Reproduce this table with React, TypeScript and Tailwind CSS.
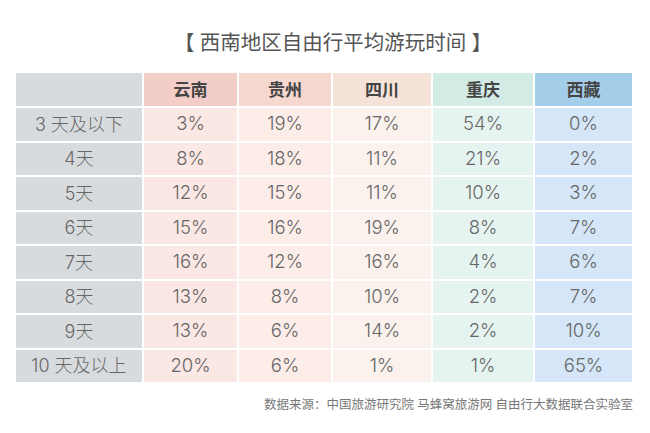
import React from "react";

const cols = [
  { name: "云南", head: "bg-[#f3cdc8]", body: "bg-[#fbe7e4]" },
  { name: "贵州", head: "bg-[#f6d8cf]", body: "bg-[#fcede9]" },
  { name: "四川", head: "bg-[#f5e2d8]", body: "bg-[#fbf2ed]" },
  { name: "重庆", head: "bg-[#d3ebe5]", body: "bg-[#e6f4f1]" },
  { name: "西藏", head: "bg-[#a4cdea]", body: "bg-[#d4e6f7]" },
];

const rows: [string, string[]][] = [
  ["3 天及以下", ["3%", "19%", "17%", "54%", "0%"]],
  ["4天", ["8%", "18%", "11%", "21%", "2%"]],
  ["5天", ["12%", "15%", "11%", "10%", "3%"]],
  ["6天", ["15%", "16%", "19%", "8%", "7%"]],
  ["7天", ["16%", "12%", "16%", "4%", "6%"]],
  ["8天", ["13%", "8%", "10%", "2%", "7%"]],
  ["9天", ["13%", "6%", "14%", "2%", "10%"]],
  ["10 天及以上", ["20%", "6%", "1%", "1%", "65%"]],
];

const bodyFont = { fontFamily: 'Inter, "Noto Sans CJK SC", sans-serif' };

export default function App() {
  return (
    <div
      className="w-[650px] h-[433px] bg-white overflow-hidden"
      style={{ fontFamily: '"Noto Sans", "Noto Sans CJK SC", sans-serif' }}
    >
      <div className="pt-[31px] h-[52px] pl-[16px] text-center text-[20.5px] leading-[22px] text-[#555]">
        【 西南地区自由行平均游玩时间 】
      </div>
      <div className="mt-[21px] ml-[16px] grid grid-cols-[126px_93px_92px_98px_100px_97px] gap-x-[2px] gap-y-[2px]">
        <div className="h-[33px] bg-[#d8dbdd]" />
        {cols.map((c) => (
          <div
            key={c.name}
            className={`h-[33px] ${c.head} flex items-center justify-center text-[17px] font-bold text-[#444]`}
          >
            {c.name}
          </div>
        ))}
        {rows.map(([label, vals]) => (
          <React.Fragment key={label}>
            <div
              className="h-[32.5px] bg-[#d8dbdd] flex items-center justify-center text-[18px] font-light text-[#666]"
              style={bodyFont}
            >
              {label}
            </div>
            {vals.map((v, i) => (
              <div
                key={i}
                className={`h-[32.5px] ${cols[i].body} flex items-center justify-center text-[18.5px] font-light text-[#666]`}
                style={bodyFont}
              >
                {v}
              </div>
            ))}
          </React.Fragment>
        ))}
      </div>
      <div className="mt-[15px] w-[633px] text-right text-[12.5px] leading-[16px] text-[#777]">
        数据来源：中国旅游研究院 马蜂窝旅游网 自由行大数据联合实验室
      </div>
    </div>
  );
}
